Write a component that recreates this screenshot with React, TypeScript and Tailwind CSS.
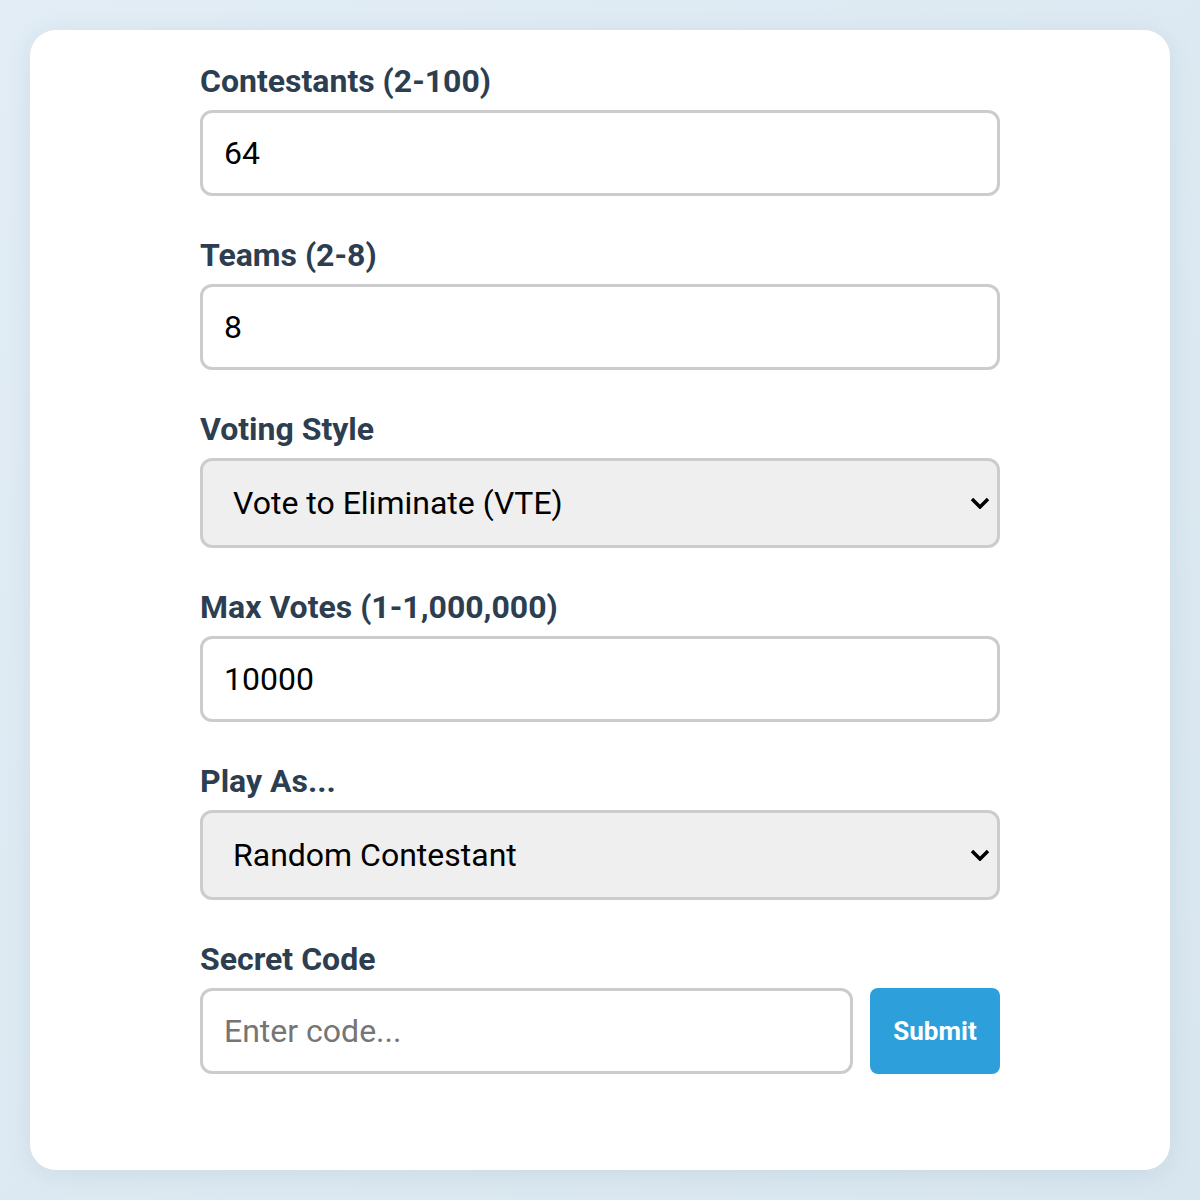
import { useState } from 'react';

// 入力フィールドの共通スタイル
const inputCls =
    "w-full h-[86px] px-[21px] border-[3px] border-[#cccccc] rounded-[12px] bg-white text-[32px] text-black outline-none placeholder:text-[#757575]";

function Label({ children }: { children: React.ReactNode }) {
    return (
        <label className="block text-[32px] leading-[36px] font-bold text-[#2c3e50] mb-[11px]">
            {children}
        </label>
    );
}

function Select({ value, onChange, options }: { value: string; onChange: (v: string) => void; options: string[] }) {
    return (
        <div className="relative">
            <select
                value={value}
                onChange={(e) => onChange(e.target.value)}
                className="w-full h-[90px] pl-[30px] pr-[60px] appearance-none border-[3px] border-[#cccccc] rounded-[12px] bg-[#efefef] text-[32px] text-black outline-none"
            >
                {options.map((o) => (
                    <option key={o}>{o}</option>
                ))}
            </select>
            {/* 下向きの矢印 */}
            <svg
                className="absolute right-[10px] top-1/2 -translate-y-1/2 pointer-events-none"
                width="20"
                height="12"
                viewBox="0 0 20 12"
            >
                <path d="M2 2 L10 10 L18 2" fill="none" stroke="black" strokeWidth="3.5" />
            </svg>
        </div>
    );
}

export default function App() {
    const [contestants, setContestants] = useState("64");
    const [teams, setTeams] = useState("8");
    const [voting, setVoting] = useState("Vote to Eliminate (VTE)");
    const [maxVotes, setMaxVotes] = useState("10000");
    const [playAs, setPlayAs] = useState("Random Contestant");
    const [code, setCode] = useState("");

    return (
        <div className="min-h-[1200px] bg-gradient-to-br from-[#e2edf5] to-[#d8e6ef] p-[30px] font-['Roboto','Liberation_Sans',sans-serif]">
            <div className="h-[1140px] bg-white rounded-[26px] shadow-[0_4px_24px_rgba(80,120,150,0.12)] pt-[33px]">
                <div className="w-[800px] mx-auto flex flex-col gap-[41px]">
                    <div>
                        <Label>Contestants (2-100)</Label>
                        <input className={inputCls} value={contestants} onChange={(e) => setContestants(e.target.value)} />
                    </div>
                    <div>
                        <Label>Teams (2-8)</Label>
                        <input className={inputCls} value={teams} onChange={(e) => setTeams(e.target.value)} />
                    </div>
                    <div>
                        <Label>Voting Style</Label>
                        <Select
                            value={voting}
                            onChange={setVoting}
                            options={["Vote to Eliminate (VTE)", "Vote to Save (VTS)"]}
                        />
                    </div>
                    <div>
                        <Label>Max Votes (1-1,000,000)</Label>
                        <input className={inputCls} value={maxVotes} onChange={(e) => setMaxVotes(e.target.value)} />
                    </div>
                    <div>
                        <Label>Play As...</Label>
                        <Select value={playAs} onChange={setPlayAs} options={["Random Contestant"]} />
                    </div>
                    <div>
                        <Label>Secret Code</Label>
                        <div className="flex gap-[17px]">
                            <input
                                className={inputCls + " flex-1"}
                                placeholder="Enter code..."
                                value={code}
                                onChange={(e) => setCode(e.target.value)}
                            />
                            <button className="w-[130px] h-[86px] shrink-0 rounded-[8px] bg-[#2d9fdb] text-white text-[26px] font-bold">
                                Submit
                            </button>
                        </div>
                    </div>
                </div>
            </div>
        </div>
    );
}
